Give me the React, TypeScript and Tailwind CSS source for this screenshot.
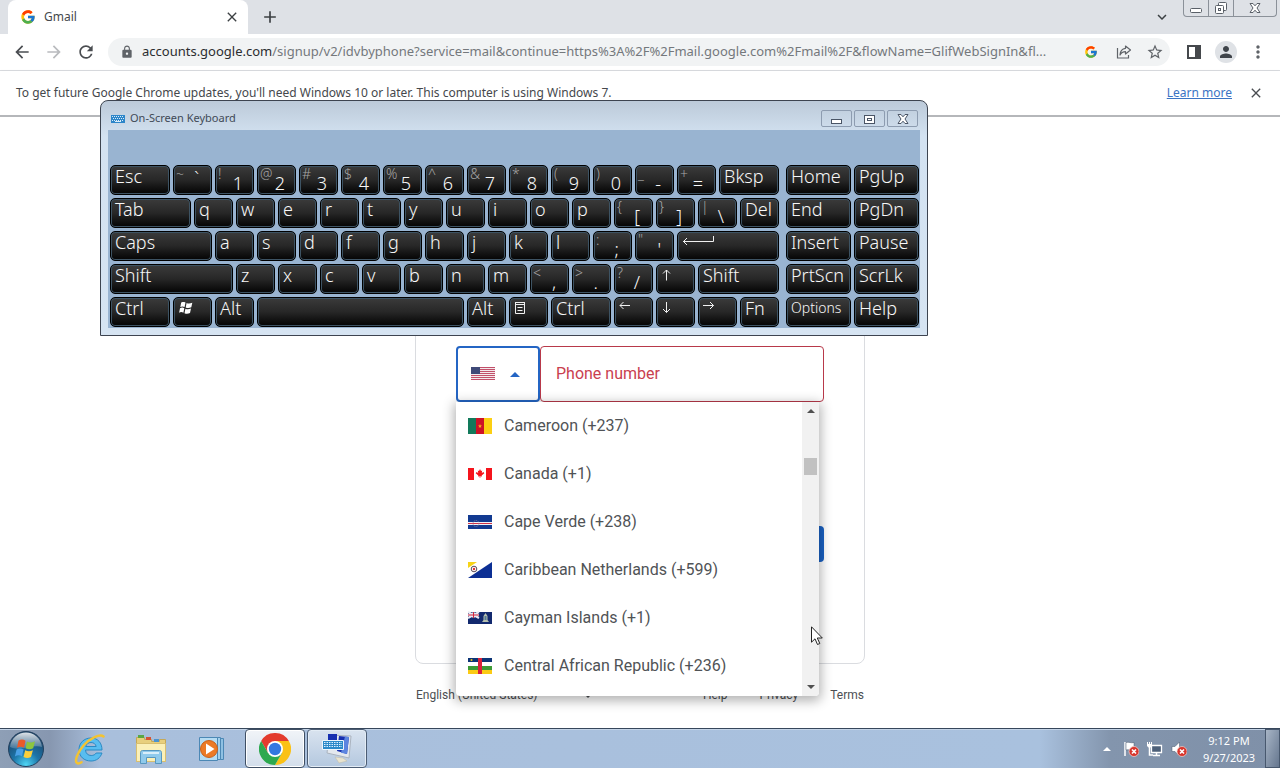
import type { ReactNode } from 'react'
import { FcGoogle } from 'react-icons/fc'
import {
  MdAdd,
  MdArrowBack,
  MdArrowForward,
  MdClose,
  MdKeyboardArrowDown,
  MdLock,
  MdMoreVert,
  MdPerson,
  MdRefresh,
  MdStarBorder,
} from 'react-icons/md'

/* ---------- Browser ---------- */

function TabStrip() {
  return (
    <div className="flex h-[34px] items-start bg-[#dee1e6] pl-2">
      <div className="flex h-[34px] w-60 items-center rounded-t-lg bg-white pr-2 pl-3">
        <FcGoogle className="size-4" />
        <span className="ml-2 flex-1 text-xs text-[#45494d]">Gmail</span>
        <button aria-label="Close tab" className="flex size-4 items-center justify-center text-[#3c4043]">
          <MdClose className="size-4" />
        </button>
      </div>
      <button aria-label="New tab" className="mt-[7px] ml-3 text-[#3c4043]">
        <MdAdd className="size-5" />
      </button>
      <button aria-label="Search tabs" className="mt-2 mr-3 ml-auto text-[#3c4043]">
        <MdKeyboardArrowDown className="size-[18px]" />
      </button>
      <div className="mr-[3px] flex h-[17px] rounded-b border border-t-0 border-[#8b9199] text-[#5a6068]">
        <button aria-label="Minimize" className="flex w-[25px] items-center justify-center border-r border-[#8b9199]">
          <svg className="size-4" viewBox="0 0 16 16" fill="#fff" stroke="currentColor">
            <rect x="2.500" y="8.500" width="11" height="4" rx="1" />
          </svg>
        </button>
        <button aria-label="Restore" className="flex w-[25px] items-center justify-center border-r border-[#8b9199]">
          <svg className="size-4" viewBox="0 0 16 16" fill="#fff" stroke="currentColor">
            <rect x="5.500" y="2.500" width="8" height="8" rx="1" />
            <rect x="2.500" y="5.500" width="8" height="8" rx="1" />
            <rect x="5.500" y="8.500" width="2" height="2" />
          </svg>
        </button>
        <button aria-label="Close" className="flex w-[42px] items-center justify-center">
          <CrossGlyph />
        </button>
      </div>
    </div>
  )
}

function CrossGlyph() {
  return (
    <svg className="h-3 w-3" viewBox="0 0 12 12" fill="#fff" stroke="currentColor" strokeWidth="1">
      <path d="M1 1.500h3L6 3.800 8 1.500h3L8 6l3 4.500H8L6 8.200 4 10.500H1L4 6z" />
    </svg>
  )
}

function Toolbar() {
  return (
    <div className="flex h-[37px] items-center border-b border-[#dadce0] bg-white px-3 text-[#5f6368]">
      <button aria-label="Back" className="text-[#4a4d51]">
        <MdArrowBack className="size-5" />
      </button>
      <button aria-label="Forward" className="ml-3 text-[#b9bbbe]">
        <MdArrowForward className="size-5" />
      </button>
      <button aria-label="Reload" className="ml-3 text-[#4a4d51]">
        <MdRefresh className="size-5" />
      </button>
      <div className="ml-3 flex h-7 min-w-0 flex-1 items-center rounded-full bg-[#f1f3f4] pr-1.5 pl-3">
        <MdLock className="size-3.5 shrink-0" />
        <span className="ml-2 min-w-0 flex-1 truncate text-[13px] text-[#74787c]">
          <span className="text-[#2b2d30]">accounts.google.com</span>
          /signup/v2/idvbyphone?service=mail&amp;continue=https%3A%2F%2Fmail.google.com%2Fmail%2F&amp;flowName=GlifWebSignIn&amp;fl...
        </span>
        <FcGoogle className="ml-3 size-3.5 shrink-0" />
        <button aria-label="Share this page" className="ml-[18px]">
          <svg className="size-4" viewBox="0 0 16 16" fill="none" stroke="currentColor" strokeWidth="1.200">
            <path d="M1.500 4v10h11v-3" />
            <path d="M9.500 2l5 4-5 4V7.700C7 7.700 5.300 8.500 4 11c.2-3.700 2-6.300 5.500-6.700z" strokeLinejoin="round" />
          </svg>
        </button>
        <button aria-label="Bookmark this tab" className="ml-3.5">
          <MdStarBorder className="size-[18px]" />
        </button>
      </div>
      <button aria-label="Side panel" className="ml-4">
        <svg className="size-4" viewBox="0 0 16 16">
          <path fill="#45484c" d="M1 1h14v14H1zM3 3v10h6V3z" fillRule="evenodd" />
        </svg>
      </button>
      <button aria-label="Profile" className="ml-[13px] flex size-[22px] items-center justify-center rounded-full bg-[#dfe2e6] text-[#3f444a]">
        <MdPerson className="size-[18px]" />
      </button>
      <button aria-label="Menu" className="ml-[11px]">
        <MdMoreVert className="size-5" />
      </button>
    </div>
  )
}

function InfoBar() {
  return (
    <div className="flex h-[46px] items-center border-b-2 border-[#b5b7ba] bg-white px-4 text-xs text-[#45484c] shadow">
      <span className="flex-1">
        To get future Google Chrome updates, you'll need Windows 10 or later. This computer is using Windows 7.
      </span>
      <a href="#updates" className="mr-4 text-[#3b74c4] underline">
        Learn more
      </a>
      <button aria-label="Dismiss" className="text-[#4a4d51]">
        <MdClose className="size-4" />
      </button>
    </div>
  )
}

/* ---------- Flags ---------- */

function Flag({ code }: { code: string }) {
  const drawings: Record<string, ReactNode> = {
    us: (
      <>
        <path fill="#f4e9ec" d="M0 1h24v13H0z" />
        <path stroke="#c2506a" d="M0 1.500h24M0 3.500h24M0 5.500h24M0 7.500h24M0 9.500h24M0 11.500h24M0 13.500h24" />
        <path fill="#3f4a78" d="M0 1h9v7H0z" />
      </>
    ),
    cm: (
      <>
        <path fill="#127a5b" d="M0 0h8v16H0z" />
        <path fill="#ce1226" d="M8 0h8v16H8z" />
        <path fill="#fccf12" d="M16 0h8v16h-8z" />
        <path fill="#fbb81f" d="M12 6l.6 1.400h1.400l-1.200 1 .5 1.500-1.300-.9-1.300.9.5-1.500-1.200-1h1.400z" />
      </>
    ),
    ca: (
      <>
        <path fill="#fff" d="M0 2h24v12H0z" />
        <path fill="#f5141c" d="M0 2h6v12H0zM18 2h6v12h-6z" />
        <path fill="#f5141c" d="M12 3l1 2 1.200-.5-.4 2.500 1.700-1 .8 1.200-2.600 2.300.3.900-1.700-.2V12h-.6v-1.800l-1.700.2.3-.9-2.600-2.300.8-1.200 1.700 1-.4-2.500L11 5z" />
      </>
    ),
    cv: (
      <>
        <path fill="#123a91" d="M0 1h24v14H0z" />
        <path fill="#f2f2f7" d="M0 8h24v3H0z" />
        <path fill="#cf3348" d="M0 9h24v1H0z" />
        <circle cx="8" cy="9.500" r="3" fill="none" stroke="#8c83a0" strokeDasharray="1 1" />
      </>
    ),
    bq: (
      <>
        <path fill="#fff" d="M0 0h24v16H0z" />
        <path fill="#f7d417" d="M0 0h9L0 6z" />
        <path fill="#0c2f94" d="M24 0v16H0z" />
        <circle cx="6" cy="7" r="2.800" fill="#fff" stroke="#5a4a56" />
        <circle cx="6" cy="7" r="1.200" fill="#d33" />
      </>
    ),
    ky: (
      <>
        <path fill="#12296e" d="M0 2h24v12H0z" />
        <path stroke="#e9e9f2" strokeWidth="2" d="M0 2l11 6M11 2L0 8M5.500 2v6M0 5h11" />
        <path stroke="#d3273e" d="M5.500 2v6M0 5h11" />
        <path fill="#b5bfae" d="M17.500 3l2 3v4l1.500 2h-7l1.500-2V6z" />
        <path fill="#557b93" d="M16.500 6h2v4h-2z" />
      </>
    ),
    cf: (
      <>
        <path fill="#0c3476" d="M0 0h24v4H0z" />
        <path fill="#fff" d="M0 4h24v4H0z" />
        <path fill="#3d9a35" d="M0 8h24v4H0z" />
        <path fill="#fbcb14" d="M0 12h24v4H0z" />
        <path fill="#d8213b" d="M10 0h4v16h-4z" />
        <circle cx="3.500" cy="2" r="1" fill="#fbcb14" />
      </>
    ),
  }
  return (
    <svg className="h-4 w-6 shrink-0" viewBox="0 0 24 16" aria-hidden="true">
      {drawings[code]}
    </svg>
  )
}

/* ---------- Sign-up page ---------- */

const COUNTRIES = [
  { code: 'cm', label: 'Cameroon (+237)' },
  { code: 'ca', label: 'Canada (+1)' },
  { code: 'cv', label: 'Cape Verde (+238)' },
  { code: 'bq', label: 'Caribbean Netherlands (+599)' },
  { code: 'ky', label: 'Cayman Islands (+1)' },
  { code: 'cf', label: 'Central African Republic (+236)' },
]

function CountryMenu() {
  return (
    <div className="absolute top-full left-0 z-10 flex h-[294px] w-[363px] overflow-hidden rounded-b bg-white shadow-[0_3px_12px_2px_rgba(0,0,0,0.3)]">
      <ul role="listbox" aria-label="Country" className="flex-1">
        {COUNTRIES.map((country) => (
          <li
            key={country.code}
            role="option"
            aria-selected="false"
            className="flex h-12 items-center gap-3 pl-3 text-base text-[#505356]"
          >
            <Flag code={country.code} />
            {country.label}
          </li>
        ))}
      </ul>
      <div className="flex w-[17px] flex-col items-center bg-[#f1f1f1] py-[7px] text-[#505050]">
        <svg className="h-1 w-2" viewBox="0 0 8 4" fill="currentColor">
          <path d="M0 4l4-4 4 4z" />
        </svg>
        <div className="mt-[45px] h-[17px] w-[13px] bg-[#c1c1c1]" />
        <svg className="mt-auto h-1 w-2" viewBox="0 0 8 4" fill="currentColor">
          <path d="M0 0l4 4 4-4z" />
        </svg>
      </div>
    </div>
  )
}

function SignUpPage() {
  return (
    <main className="flex-1 bg-white pt-6 font-[Roboto,sans-serif]">
      <form className="mx-auto w-[450px] rounded-lg border border-[#dadce0] px-10 pt-[204px] pb-[101px]">
        <div className="relative flex h-14">
          <button
            type="button"
            aria-label="Country code, United States"
            aria-expanded="true"
            className="flex w-[84px] items-center justify-between rounded border-2 border-[#2465c4] pr-[18px] pl-[13px]"
          >
            <Flag code="us" />
            <svg className="h-[5px] w-2.5" viewBox="0 0 10 5" fill="#2465c4">
              <path d="M0 5l5-5 5 5z" />
            </svg>
          </button>
          <input
            type="tel"
            aria-label="Phone number"
            placeholder="Phone number"
            className="min-w-0 flex-1 rounded border border-[#b8394a] px-[15px] text-base placeholder:text-[#c9404f]"
          />
          <CountryMenu />
        </div>
        <div className="mt-[124px] flex justify-end">
          <button type="button" aria-label="Next" className="h-9 w-[76px] rounded bg-[#1a62c5]" />
        </div>
      </form>
      <footer className="mx-auto mt-[23px] flex h-4 w-[448px] items-center text-xs text-[#4c4f53]">
        <select aria-label="Language" className="w-[167px] appearance-none">
          <option>English (United States)</option>
        </select>
        <svg className="h-[5px] w-2.5" viewBox="0 0 10 5" fill="currentColor">
          <path d="M0 0l5 5 5-5z" />
        </svg>
        <nav className="ml-auto flex gap-8">
          <a href="#help">Help</a>
          <a href="#privacy">Privacy</a>
          <a href="#terms">Terms</a>
        </nav>
      </footer>
    </main>
  )
}

/* ---------- On-screen keyboard ---------- */

type KeyDef = {
  label: string
  alt?: string
  span?: string
  icon?: ReactNode
}

const arrow = (d: string) => (
  <svg className="size-3" viewBox="0 0 12 12" fill="none" stroke="#f0f0f0">
    <path d={d} />
  </svg>
)

const letters = (text: string): KeyDef[] => text.split('').map((label) => ({ label }))

const ROWS: KeyDef[][] = [
  [
    { label: 'Esc', span: 'col-span-3' },
    { label: '`', alt: '~' },
    { label: '1', alt: '!' },
    { label: '2', alt: '@' },
    { label: '3', alt: '#' },
    { label: '4', alt: '$' },
    { label: '5', alt: '%' },
    { label: '6', alt: '^' },
    { label: '7', alt: '&' },
    { label: '8', alt: '*' },
    { label: '9', alt: '(' },
    { label: '0', alt: ')' },
    { label: '-', alt: '_' },
    { label: '=', alt: '+' },
    { label: 'Bksp', span: 'col-span-3' },
  ],
  [
    { label: 'Tab', span: 'col-span-4' },
    ...letters('qwertyuiop'),
    { label: '[', alt: '{' },
    { label: ']', alt: '}' },
    { label: '\\', alt: '|' },
    { label: 'Del' },
  ],
  [
    { label: 'Caps', span: 'col-span-5' },
    ...letters('asdfghjkl'),
    { label: ';', alt: ':' },
    { label: "'", alt: '"' },
    {
      label: 'Enter',
      span: 'col-span-5',
      icon: (
        <svg className="h-3 w-8" viewBox="0 0 32 12" fill="none" stroke="#f0f0f0">
          <path d="M31.500 0v5.500H1M5 2L1.500 5.500 5 9" />
        </svg>
      ),
    },
  ],
  [
    { label: 'Shift', span: 'col-span-6' },
    ...letters('zxcvbnm'),
    { label: ',', alt: '<' },
    { label: '.', alt: '>' },
    { label: '/', alt: '?' },
    { label: 'Up', icon: arrow('M5.500 11.500V1M2 4.500L5.500 1 9 4.500') },
    { label: 'Shift', span: 'col-span-4' },
  ],
  [
    { label: 'Ctrl', span: 'col-span-3' },
    {
      label: 'Windows',
      icon: (
        <svg className="size-4" viewBox="0 0 16 16" fill="#fff">
          <path d="M3.200 .5c1.500-.8 3-.8 4.300 0L6.600 5c-1.400-.7-2.900-.7-4.300 0zM8.600 1c1.500.8 3.300.8 5.700-.2l-1 4.500c-2 1-3.900 1-5.600.2zM2 6.200c1.500-.8 3-.8 4.300 0l-.9 4.500c-1.400-.8-2.900-.8-4.300 0zM7.400 6.700c1.700.8 3.500.8 5.600-.2l-1 4.500c-2 1-3.800 1-5.500.2z" />
        </svg>
      ),
    },
    { label: 'Alt' },
    { label: 'Space', span: 'col-span-10', icon: <span /> },
    { label: 'Alt' },
    {
      label: 'Menu',
      icon: (
        <svg className="h-3.5 w-3" viewBox="0 0 12 14" fill="none" stroke="#f0f0f0">
          <path d="M1.500 0v11.500h9V0M1 .5h10M1 2.500h10M3.500 5.500h5M3.500 8.500h5" />
        </svg>
      ),
    },
    { label: 'Ctrl', span: 'col-span-3' },
    { label: 'Left', icon: arrow('M11 3.500H1M4.500 0L1 3.500 4.500 7') },
    { label: 'Down', icon: arrow('M5.500 0v10.500M2 7l3.500 3.500L9 7') },
    { label: 'Right', icon: arrow('M0 3.500h10.500M7 0l3.500 3.500L7 7') },
    { label: 'Fn' },
  ],
]

const NAV_KEYS = ['Home', 'PgUp', 'End', 'PgDn', 'Insert', 'Pause', 'PrtScn', 'ScrLk', 'Options', 'Help']

function Key({ label, alt, span = 'col-span-2', icon }: KeyDef) {
  const isDigit = /\d/.test(label)
  return (
    <button
      aria-label={label}
      className={`flex h-[30px] items-start overflow-hidden rounded-[5px] border border-black bg-linear-to-b from-[#3b3b3b] via-[#272727] to-[#050505] text-lg font-light text-[#f8f8f8] shadow-[inset_0_0_0_1px_#3d5363] ${span}`}
    >
      {icon ? (
        <span className="pt-1 pl-1">{icon}</span>
      ) : alt ? (
        <span className={`flex w-full items-start justify-between pl-0.5 ${isDigit ? 'pr-2.5' : 'pr-3'}`}>
          <span className="text-sm leading-4 text-[#a6a6a6]">{alt}</span>
          <span className={label === '`' ? 'leading-6' : 'pt-1.5 leading-[22px]'}>{label}</span>
        </span>
      ) : (
        <span className={label === 'Options' ? 'pl-1 text-sm leading-5' : 'pl-1 leading-5'}>{label}</span>
      )}
    </button>
  )
}

function OnScreenKeyboard() {
  return (
    <section
      aria-label="On-Screen Keyboard"
      className="absolute top-[100px] left-[100px] z-20 w-[828px] rounded-t-lg border border-[#3d4450] bg-linear-to-b from-[#bccad9] via-[#d3e2f1] via-15% to-[#d6e4f2] px-[7px] pb-[7px]"
    >
      <header className="flex h-[29px] items-center pt-1.5 pr-0.5 pl-[3px]">
        <svg className="h-2.5 w-3.5" viewBox="0 0 14 10">
          <path fill="#2d86c9" d="M0 1h14v8H0z" />
          <path stroke="#d9ecfa" strokeDasharray="1 1" d="M1 2.500h12M2 4.500h11M1 6.500h12" />
          <path stroke="#d9ecfa" d="M4 7.500h6" />
        </svg>
        <h2 className="ml-[5px] flex-1 text-[11px] text-[#414a56]">On-Screen Keyboard</h2>
        <div className="flex gap-0.5 text-[#4a5566]">
          <button aria-label="Minimize" className="flex h-[17px] w-[31px] items-center justify-center rounded-xs border border-[#8d9cb0]">
            <svg className="h-3 w-3" viewBox="0 0 12 12" fill="#fff" stroke="currentColor">
              <rect x="0.500" y="6.500" width="10" height="4" />
            </svg>
          </button>
          <button aria-label="Maximize" className="flex h-[17px] w-[31px] items-center justify-center rounded-xs border border-[#8d9cb0]">
            <svg className="h-3 w-3" viewBox="0 0 12 12" fill="#fff" stroke="currentColor">
              <rect x="0.500" y="2.500" width="10" height="8" />
              <rect x="3.500" y="5.500" width="4" height="2" />
            </svg>
          </button>
          <button aria-label="Close" className="flex h-[17px] w-[31px] items-center justify-center rounded-xs border border-[#8d9cb0]">
            <CrossGlyph />
          </button>
        </div>
      </header>
      <div className="flex gap-[7px] bg-[#99b4d1] pt-[35px] pr-px pb-px pl-0.5">
        <div className="flex flex-1 flex-col gap-[3px]">
          {ROWS.map((row, idx) => (
            <div key={idx} className="grid grid-cols-32 gap-[3px]">
              {row.map((key, i) => (
                <Key key={i} {...key} />
              ))}
            </div>
          ))}
        </div>
        <div className="grid w-[133px] grid-cols-2 gap-[3px]">
          {NAV_KEYS.map((label) => (
            <Key key={label} label={label} span="col-span-1" />
          ))}
        </div>
      </div>
    </section>
  )
}

/* ---------- Taskbar ---------- */

function StartOrb() {
  return (
    <svg className="size-[38px]" viewBox="0 0 38 38">
      <defs>
        <radialGradient id="orb" cx="50%" cy="95%" r="85%">
          <stop offset="0" stopColor="#4fd6f5" />
          <stop offset="0.450" stopColor="#1c74a8" />
          <stop offset="1" stopColor="#1f4569" />
        </radialGradient>
        <linearGradient id="shine" x1="0" y1="0" x2="0" y2="1">
          <stop offset="0" stopColor="#fff" stopOpacity="0.850" />
          <stop offset="1" stopColor="#fff" stopOpacity="0.150" />
        </linearGradient>
      </defs>
      <circle cx="19" cy="19" r="17.500" fill="url(#orb)" stroke="#24415e" />
      <path fill="url(#shine)" d="M3 17C4 8 11 2.500 19 2.500S34 8 35 17c-10-3-22 5-32 0z" />
      <path fill="#ea5a2a" d="M11.500 10.500c2.500-1.500 5-1.300 7 .2l-1.500 7c-2.300-1.300-4.500-1.300-7 0z" />
      <path fill="#8cc63f" d="M20 11.500c2.500 1.300 5 1.200 8-.3l-1.800 7c-2.700 1.400-5 1.300-7.600 0z" />
      <path fill="#4aa0e6" d="M9.600 19.500c2.500-1.400 4.800-1.300 7 0l-1.700 6.800c-2-1.300-4.400-1.300-7 .1z" />
      <path fill="#fbcf3b" d="M18.200 20.300c2.500 1.300 5 1.300 7.700 0L24 27c-2.500 1.300-5 1.300-7.500 0z" />
    </svg>
  )
}

function ExplorerE() {
  return (
    <svg className="size-8" viewBox="0 0 32 32" fill="none">
      <path
        d="M28 17H11.500c.2 3.500 2.500 5.500 5.700 5.500 2.300 0 4-.9 5-2.500H28c-1.700 5-5.600 8-11 8C10 28 5 23.500 5 16.500 5 10 10 5 17 5s11 5 11 12zM11.700 13.500h10.500C21.600 11 19.700 9.500 17 9.500s-4.600 1.500-5.300 4z"
        fill="#58bdf0"
        stroke="#2b8ac4"
      />
      <path d="M29.500 3.500C26 .500 16 5 9.500 12.500 3 20 .5 28 3 30c1 .8 2.800.3 4.500-.8" stroke="#f3c332" strokeWidth="2.500" strokeLinecap="round" />
    </svg>
  )
}

function FolderIcon() {
  return (
    <svg className="size-8" viewBox="0 0 32 32">
      <path fill="#e8cf7d" stroke="#c5a858" d="M1.500 4.500h8v2h7v2h8v-2h6v22h-29z" />
      <path fill="#5aa745" d="M3 2h6v3H3z" />
      <path fill="#d55335" d="M11 4h5v3h-5z" />
      <path fill="#4c94cf" d="M19 6h5v3h-5z" />
      <path fill="#fbf0b8" stroke="#d8bf70" d="M1.500 10.500h29v18h-29z" />
      <path fill="#8fcaec" stroke="#5797bf" d="M5.500 19.500c0-1 .7-2 2-2h17c1.300 0 2 1 2 2v11h-6v-6h-9v6h-6z" />
      <path fill="#d8eefa" d="M8 19h16v2H8z" />
    </svg>
  )
}

function MediaPlayerIcon() {
  return (
    <svg className="h-7 w-8" viewBox="0 0 32 28">
      <path fill="#8fc1e3" stroke="#4c88b5" d="M12.500 3.500h15v21h-15z" />
      <path fill="#a4d0ec" stroke="#4c88b5" d="M8.500 2.500h16v22h-16z" />
      <path fill="#b5dcf3" stroke="#4c88b5" d="M3.500 2.500h18v23h-18z" />
      <circle cx="13" cy="14" r="8.500" fill="#ec7a26" stroke="#c9611a" />
      <path fill="#fff" d="M10 8.500l8.500 5.500-8.500 5.500z" />
    </svg>
  )
}

function ChromeLogo() {
  return (
    <svg className="size-8" viewBox="0 0 32 32">
      <path fill="#e33b2e" d="M2.140 8A16 16 0 0 1 29.860 8L16 8 9 20z" />
      <path fill="#fbc116" d="M29.860 8A16 16 0 0 1 16 32l6.900-12L16 8z" />
      <path fill="#2da94f" d="M16 32A16 16 0 0 1 2.140 8l6.930 12 13.830 0z" />
      <circle cx="16" cy="16" r="8" fill="#fff" />
      <circle cx="16" cy="16" r="6.200" fill="#3278e0" />
    </svg>
  )
}

function KeyboardAppIcon() {
  return (
    <svg className="size-8" viewBox="0 0 32 32">
      <path fill="#e3e8ee" stroke="#aab3bf" d="M8 2l22 1-2 22-22-5z" />
      <path fill="#1730b0" d="M7 1h9v6H7zM18 3l10 1-2 17-10-3z" />
      <path fill="#5c85e0" d="M24 3.600l4 .4-2 17-6-1.300z" />
      <path fill="#e9e4cf" stroke="#bdb9a8" strokeWidth="0.500" d="M14 24l8 1 4 3-8 2z" />
      <path fill="#2b8ac9" stroke="#eef6fc" d="M1.500 7.500h21v9h-21z" />
      <path stroke="#dcefff" strokeDasharray="1.500 1" d="M3 9.500h18M3 11.500h18M3 13.500h18" />
    </svg>
  )
}

function ErrorBadge() {
  return (
    <>
      <circle cx="11" cy="10.500" r="5" fill="#d8352c" stroke="#f2d6d3" strokeWidth="0.700" />
      <path d="M9 8.500l4 4M13 8.500l-4 4" stroke="#fff" strokeWidth="1.600" />
    </>
  )
}

function Taskbar() {
  return (
    <footer className="z-30 flex h-10 items-center border-t border-[#37475b] bg-[linear-gradient(to_right,#8e9fb6_0px,#8797b0_50px,#a9bfdc_100px,#a9c1de_calc(100%-240px),#8395ad_calc(100%-170px),#7f90a8_100%)] pl-[7px] shadow-[inset_0_1px_0_#c5d5e8]">
      <button aria-label="Start" className="w-[38px]">
        <StartOrb />
      </button>
      <button aria-label="Internet Explorer" className="ml-[15px] flex w-[60px] justify-center">
        <ExplorerE />
      </button>
      <button aria-label="Windows Explorer" className="flex w-[61px] justify-center">
        <FolderIcon />
      </button>
      <button aria-label="Windows Media Player" className="flex w-[61px] justify-center">
        <MediaPlayerIcon />
      </button>
      <button aria-label="Google Chrome" className="ml-[3px] flex h-[39px] w-[60px] items-center justify-center rounded-sm border border-[#3f4f64] bg-linear-to-b from-[#f1f4f8] to-[#d3deeb] shadow-[inset_0_0_0_1px_#ffffff]">
        <ChromeLogo />
      </button>
      <button aria-label="On-Screen Keyboard" className="ml-0.5 flex h-[39px] w-[60px] items-center justify-center rounded-sm border border-[#4c5d74] bg-linear-to-b from-[#d9e3ef] to-[#b4c8df] shadow-[inset_0_0_0_1px_#e3ecf5]">
        <KeyboardAppIcon />
      </button>
      <div className="ml-auto flex items-center">
        <button aria-label="Show hidden icons">
          <svg className="h-1 w-2" viewBox="0 0 8 4" fill="#fff">
            <path d="M0 4l4-4 4 4z" />
          </svg>
        </button>
        <svg className="ml-3 size-4" viewBox="0 0 16 16" role="img" aria-label="Action Center">
          <path d="M2 1v14" stroke="#fff" strokeWidth="1.500" />
          <path fill="#fff" stroke="#44546a" strokeWidth="0.500" d="M3 1.500c3-1 5 1 8 0V9c-3 1-5-1-8 0z" />
          <ErrorBadge />
        </svg>
        <svg className="ml-2 size-4" viewBox="0 0 16 16" role="img" aria-label="Network">
          <path fill="#4d6079" stroke="#fff" strokeWidth="1.300" d="M4.500 4.500h10v7h-10z" />
          <path stroke="#fff" strokeWidth="1.500" d="M6 14.500h7M9.500 12v2M2.500 6v8H6" fill="none" />
          <path fill="#fff" d="M0 1h1v2h1V1h1v2h1V1h1v4L3.500 6.500h-2L0 5z" />
        </svg>
        <svg className="ml-2 size-4" viewBox="0 0 16 16" role="img" aria-label="Volume muted">
          <path fill="#fff" stroke="#44546a" strokeWidth="0.500" d="M1 5.500h3L8.500 1v14L4 10.500H1z" />
          <ErrorBadge />
        </svg>
        <div className="ml-3 w-[60px] text-center text-[11px] leading-[17px] text-white">
          <p>9:12 PM</p>
          <p>9/27/2023</p>
        </div>
        <button aria-label="Show desktop" className="ml-1.5 h-[39px] w-[15px] border border-[#48586e] bg-linear-to-br from-[#a8b5c6] to-[#66778f]" />
      </div>
    </footer>
  )
}

export default function App() {
  return (
    <div className="relative flex min-h-screen flex-col overflow-hidden bg-white font-['Noto_Sans',sans-serif]">
      <TabStrip />
      <Toolbar />
      <InfoBar />
      <SignUpPage />
      <Taskbar />
      <OnScreenKeyboard />
      {/* Mouse pointer */}
      <svg className="pointer-events-none absolute top-[626px] left-[811px] z-40 h-5 w-3.5" viewBox="0 0 14 20">
        <path fill="#fff" stroke="#222" d="M.5.800v15.400l3.500-3.400 2.500 5.700 2.300-1-2.500-5.500h5z" />
      </svg>
    </div>
  )
}
